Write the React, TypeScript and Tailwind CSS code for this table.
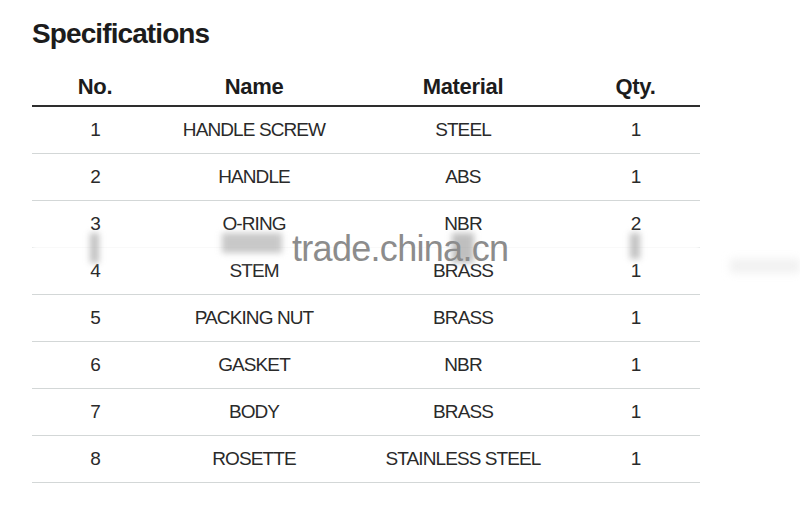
import React from "react";

const rows = [
  ["1", "HANDLE SCREW", "STEEL", "1"],
  ["2", "HANDLE", "ABS", "1"],
  ["3", "O-RING", "NBR", "2"],
  ["4", "STEM", "BRASS", "1"],
  ["5", "PACKING NUT", "BRASS", "1"],
  ["6", "GASKET", "NBR", "1"],
  ["7", "BODY", "BRASS", "1"],
  ["8", "ROSETTE", "STAINLESS STEEL", "1"],
];

const cols = "grid grid-cols-[126px_192px_224px_126px]";

export default function App() {
  return (
    <div
      className="relative w-[800px] h-[522px] bg-white overflow-hidden"
      style={{ fontFamily: '"Liberation Sans", Arial, sans-serif' }}
    >
      <div className="pl-[32px] pt-[20px]">
        <h1 className="text-[28px] leading-[28px] font-bold tracking-[-0.9px] text-[#1c1c1c]">
          Specifications
        </h1>
        <div className="w-[668px] mt-[19px]">
          <div className={`${cols} h-[40px] items-center border-b-2 border-[#2e2e2e] text-[22px] font-bold text-[#1c1c1c] tracking-[-0.3px]`}>
            <div className="text-center">No.</div>
            <div className="text-center">Name</div>
            <div className="text-center pl-[2px]">Material</div>
            <div className="text-center pr-[3px]">Qty.</div>
          </div>
          {rows.map((r) => (
            <div
              key={r[0]}
              className={`${cols} h-[47px] items-center border-b border-[#d3d7d7] text-[19px] tracking-[-0.9px] text-[#2a2a2a]`}
            >
              <div className="text-center">{r[0]}</div>
              <div className="text-center">{r[1]}</div>
              <div className="text-center pl-[2px]">{r[2]}</div>
              <div className="text-center pr-[3px]">{r[3]}</div>
            </div>
          ))}
        </div>
      </div>

      {/* watermark */}
      <div className="absolute left-[32px] top-[238px] w-[668px] h-[24px] bg-white/85 blur-[2px]" />
      <div className="absolute left-[90px] top-[233px] w-[9px] h-[30px] bg-[#9a9a9a]/60 blur-[3px]" />
      <div className="absolute left-[222px] top-[233px] w-[60px] h-[20px] bg-[#9a9a9a]/55 blur-[3px]" />
      <div className="absolute left-[452px] top-[233px] w-[22px] h-[30px] bg-[#8a8a8a]/55 blur-[3px]" />
      <div className="absolute left-[630px] top-[233px] w-[10px] h-[26px] bg-[#9a9a9a]/60 blur-[3px]" />
      <div className="absolute left-[730px] top-[259px] w-[70px] h-[14px] bg-[#e8e8e8]/60 blur-[4px]" />
      <div className="absolute left-[292px] top-[229px] text-[36px] leading-[40px] tracking-[-0.7px] text-[#8c8c8c]">
        trade.china.cn
      </div>
    </div>
  );
}
